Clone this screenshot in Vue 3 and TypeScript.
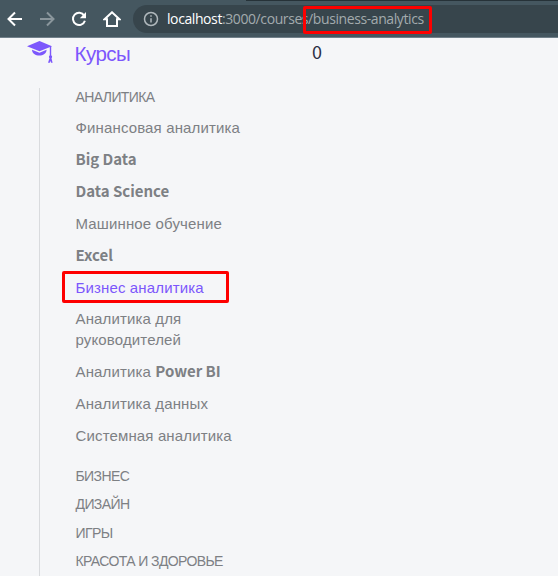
<script setup lang="ts">
interface Part {
  text: string
  latin?: boolean
}
interface Course {
  id: string
  parts: Part[]
  active?: boolean
}

const courses: Course[] = [
  { id: 'finance', parts: [{ text: 'Финансовая аналитика' }] },
  { id: 'big-data', parts: [{ text: 'Big Data', latin: true }] },
  { id: 'data-science', parts: [{ text: 'Data Science', latin: true }] },
  { id: 'ml', parts: [{ text: 'Машинное обучение' }] },
  { id: 'excel', parts: [{ text: 'Excel', latin: true }] },
  { id: 'business-analytics', parts: [{ text: 'Бизнес аналитика' }], active: true },
  { id: 'managers', parts: [{ text: 'Аналитика для руководителей' }] },
  { id: 'power-bi', parts: [{ text: 'Аналитика ' }, { text: 'Power BI', latin: true }] },
  { id: 'data', parts: [{ text: 'Аналитика данных' }] },
  { id: 'system', parts: [{ text: 'Системная аналитика' }] },
]

const sections: string[] = ['Бизнес', 'Дизайн', 'Игры', 'Красота и здоровье']
</script>

<template>
  <div class="window">
    <header class="toolbar">
      <div class="tab-edge"></div>
      <svg class="nav" viewBox="0 0 16 16"><path d="M15 8H2M8 1.5L1.5 8L8 14.5" /></svg>
      <svg class="nav dim" viewBox="0 0 16 16"><path d="M1 8H14M8 1.5L14.500 8L8 14.5" /></svg>
      <svg class="nav" viewBox="0 0 16 16">
        <path d="M13.200 4.600A6.100 6.100 0 1 0 13.900 9.700" />
        <path class="solid" d="M15 1V7.200H8.800Z" />
      </svg>
      <svg class="nav home" viewBox="0 0 18 16"><path d="M1.500 8.300L9 1.300L16.500 8.300H14V14.900H4V8.300Z" /></svg>
      <div class="address">
        <svg class="info" viewBox="0 0 16 16">
          <circle cx="8" cy="8" r="6.500" />
          <path d="M8 7.200V11.500M8 4.200V5.800" />
        </svg>
        <span class="url"><b>localhost</b>:3000/courses/business-analytics</span>
      </div>
      <div class="mark mark-url"></div>
    </header>

    <div class="page">
      <aside class="sidebar">
        <div class="title">
          <svg class="cap" viewBox="0 0 28 24">
            <path d="M1 6.200L13.500 1L26 6.200L13.500 11.300Z" />
            <path d="M6 9.800L13.500 12.800L20.600 9.800C20.600 17.500 6 17.500 6 9.800Z" />
            <path d="M23.800 6H25.200V15.200C26.500 16.200 26.300 17.400 25.500 18.200L26.600 22.800H25L24.500 20.800L23.800 22.800H22L23.500 18.200C22.700 17.200 22.700 16 23.800 15.200Z" />
          </svg>
          <span>Курсы</span>
        </div>
        <nav class="tree">
          <div class="section first">Аналитика</div>
          <ul class="courses">
            <li v-for="course in courses" :key="course.id" :class="{ active: course.active }">
              <span v-for="part in course.parts" :key="part.text" :class="{ latin: part.latin }">{{ part.text }}</span>
              <div v-if="course.active" class="mark mark-item"></div>
            </li>
          </ul>
          <div v-for="section in sections" :key="section" class="section">{{ section }}</div>
        </nav>
      </aside>
      <main class="content">0</main>
    </div>
  </div>
</template>

<style>
body {
  margin: 0;
  overflow: hidden;
}
</style>

<style scoped>
.window {
  width: 558px;
  height: 576px;
  overflow: hidden;
  background: #f5f6f8;
  font-family: "Liberation Sans", Arial, sans-serif;
  color: #7d8084;
}
.toolbar {
  position: relative;
  box-sizing: border-box;
  height: 38px;
  display: flex;
  align-items: center;
  padding-left: 7px;
  background: #455760;
  border-bottom: 1px solid #71808a;
}
.tab-edge {
  position: absolute;
  top: 0;
  left: 246px;
  right: 0;
  height: 1px;
  background: #263238;
}
.nav {
  width: 16px;
  height: 16px;
  margin-right: 16px;
  flex: none;
  fill: none;
  stroke: #fff;
  stroke-width: 2;
}
.nav .solid {
  fill: #fff;
  stroke: none;
}
.dim {
  stroke: #8a969c;
}
.home {
  width: 18px;
  margin-right: 12px;
}
.address {
  flex: 1;
  height: 28px;
  display: flex;
  align-items: center;
  padding-left: 10px;
  border-radius: 14px 0 0 14px;
  background: #37454c;
}
.info {
  width: 16px;
  height: 16px;
  margin-right: 8px;
  fill: none;
  stroke: #b0b8bc;
  stroke-width: 1.5;
}
.url {
  font: 14px/20px "Open Sans", "Noto Sans", sans-serif;
  letter-spacing: -0.41px;
  color: #a3abae;
  white-space: nowrap;
}
.url b {
  font-weight: 400;
  color: #fff;
}
.mark {
  position: absolute;
  box-sizing: border-box;
  border: 3px solid #fe0000;
  border-radius: 2px;
}
.mark-url {
  left: 303px;
  top: 6px;
  width: 129px;
  height: 28px;
}
.mark-item {
  left: -13.5px;
  top: -6px;
  width: 167px;
  height: 32px;
}
.page {
  display: flex;
}
.sidebar {
  width: 260px;
}
.title {
  display: flex;
  height: 50px;
  padding-left: 26px;
  color: #7c57fc;
  font-size: 20.5px;
  line-height: 31px;
  letter-spacing: -0.5px;
}
.cap {
  width: 28px;
  height: 24px;
  margin: 2px 20.5px 0 0;
  fill: #7c57fc;
}
.tree {
  margin-left: 39px;
  height: 488px;
  padding-left: 35.5px;
  border-left: 1px solid #d9dbde;
}
.section {
  height: 28.5px;
  font-size: 14px;
  line-height: 18px;
  letter-spacing: -0.6px;
  text-transform: uppercase;
  white-space: nowrap;
}
.first {
  height: 29.1px;
}
.courses {
  list-style: none;
  margin: 0 0 20.8px;
  padding: 0;
  width: 168px;
}
.courses li {
  position: relative;
  margin-bottom: 10.900px;
  font-size: 15px;
  line-height: 21px;
  letter-spacing: 0.14px;
}
.courses .active {
  color: #7c57fc;
}
.courses .latin {
  font-family: "Noto Sans CJK SC", sans-serif;
  font-weight: 700;
  line-height: 1;
  letter-spacing: -0.02px;
}
.content {
  padding-left: 52px;
  font: 400 18px/26px "Noto Sans CJK SC", sans-serif;
  color: #2c3047;
}
</style>
